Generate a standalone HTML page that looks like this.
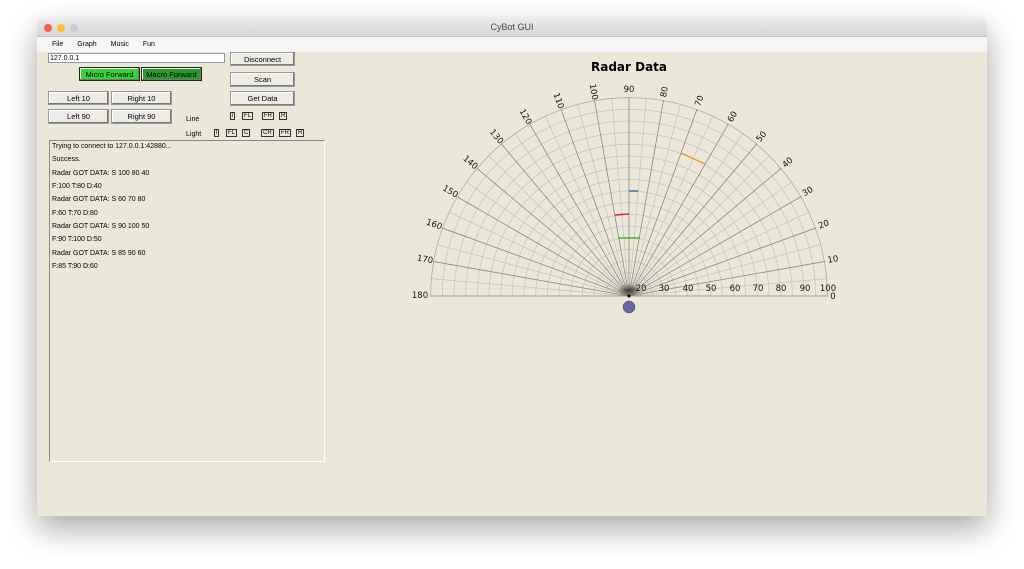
<!DOCTYPE html>
<html><head><meta charset="utf-8"><style>
body{margin:0;width:1024px;height:569px;background:#fff;font-family:"Liberation Sans",sans-serif;position:relative;overflow:hidden}
.win{position:absolute;left:37px;top:19px;width:950px;height:497px;background:#ebe8da;box-shadow:0 12px 30px rgba(0,0,0,.35)}
.title{height:17px;background:linear-gradient(#ebebeb,#d6d6d6);border-bottom:1px solid #c0c0c0;text-align:center;font-size:9px;line-height:17px;color:#444}
.dot{position:absolute;top:5px;width:8px;height:8px;border-radius:50%}
.menu{height:15px;background:#f6f6f6;font-size:7px;line-height:15px}
.menu span{margin-left:15px;margin-right:-3px}
.abs{position:absolute}
.btn{position:absolute;background:#ecebe5;border:1px solid #999;box-shadow:inset -1px -1px 0 #777,inset 1px 1px 0 #fff;font-size:7.5px;text-align:center;box-sizing:border-box}
.lg{position:absolute;font-size:7px}
.box{position:absolute;border:1px solid #333;font-size:6px;line-height:6px;padding:0 1px;height:8px;box-sizing:border-box}
.log{position:absolute;left:12px;top:121px;width:276px;height:322px;border:1px solid #888;border-right-color:#fff;border-bottom-color:#fff;box-sizing:border-box;font-size:7px}
.log div{height:13.33px;line-height:12px;padding-left:2px}
</style></head><body>
<div class="win">
<div class="title">CyBot GUI</div>
<div class="dot" style="left:7px;background:#fc5f57"></div>
<div class="dot" style="left:20px;background:#fdbc2e"></div>
<div class="dot" style="left:33px;background:#ccc"></div>
<div class="menu"><span>File</span> <span>Graph</span> <span>Music</span> <span>Fun</span></div>
<div class="abs" style="left:11px;top:34px;width:177px;height:10px;background:#fff;border:1px solid #999;box-sizing:border-box;font-size:7px;line-height:9px;padding-left:1px">127.0.0.1</div>
<div class="btn" style="left:193px;top:33px;width:65px;height:14px;line-height:13px">Disconnect</div>
<div class="btn" style="left:42px;top:48px;width:61px;height:14px;line-height:13px;background:#33d533;border-color:#222">Micro Forward</div>
<div class="btn" style="left:104px;top:48px;width:61px;height:14px;line-height:13px;background:#279b27;border-color:#222">Macro Forward</div>
<div class="btn" style="left:193px;top:53px;width:65px;height:15px;line-height:14px">Scan</div>
<div class="btn" style="left:11px;top:72px;width:61px;height:14px;line-height:13px">Left 10</div>
<div class="btn" style="left:74px;top:72px;width:61px;height:14px;line-height:13px">Right 10</div>
<div class="btn" style="left:193px;top:72px;width:65px;height:15px;line-height:14px">Get Data</div>
<div class="btn" style="left:11px;top:90px;width:61px;height:15px;line-height:14px">Left 90</div>
<div class="btn" style="left:74px;top:90px;width:61px;height:15px;line-height:14px">Right 90</div>
<div class="lg" style="left:149px;top:97px">Line</div>
<div class="lg" style="left:149px;top:112px">Light</div>
<div class="box" style="left:193px;top:93px">l</div>
<div class="box" style="left:205px;top:93px">FL</div>
<div class="box" style="left:225px;top:93px">FR</div>
<div class="box" style="left:242px;top:93px">R</div>
<div class="box" style="left:177px;top:110px">l</div>
<div class="box" style="left:189px;top:110px">FL</div>
<div class="box" style="left:205px;top:110px">C</div>
<div class="box" style="left:224px;top:110px">CR</div>
<div class="box" style="left:242px;top:110px">FR</div>
<div class="box" style="left:259px;top:110px">R</div>
<div class="log">
<div>Trying to connect to 127.0.0.1:42880...</div><div>Success.</div>
<div>Radar GOT DATA: S 100 80 40</div><div>F:100 T:80 D:40</div>
<div>Radar GOT DATA: S 60 70 80</div><div>F:60 T:70 D:80</div>
<div>Radar GOT DATA: S 90 100 50</div><div>F:90 T:100 D:50</div>
<div>Radar GOT DATA: S 85 90 60</div><div>F:85 T:90 D:60</div>
</div>
</div>
<svg class="abs" style="left:0;top:0" width="1024" height="569" font-family="DejaVu Sans,sans-serif">
<text x="629" y="71" text-anchor="middle" font-size="12" font-weight="bold">Radar Data</text>
<defs><clipPath id="c"><rect x="400" y="60" width="460" height="236"/></clipPath>
<radialGradient id="g"><stop offset="0" stop-color="#000"/><stop offset="1" stop-color="#000" stop-opacity="0"/></radialGradient></defs>
<g clip-path="url(#c)" fill="none" stroke="#c9c7bc" stroke-width=".8">
<circle cx="629" cy="296" r="11.67"/><circle cx="629" cy="296" r="23.33"/><circle cx="629" cy="296" r="35"/><circle cx="629" cy="296" r="46.67"/><circle cx="629" cy="296" r="58.33"/><circle cx="629" cy="296" r="70"/><circle cx="629" cy="296" r="81.67"/><circle cx="629" cy="296" r="93.33"/><circle cx="629" cy="296" r="105"/><circle cx="629" cy="296" r="116.67"/><circle cx="629" cy="296" r="128.33"/><circle cx="629" cy="296" r="140"/><circle cx="629" cy="296" r="151.67"/><circle cx="629" cy="296" r="163.33"/><circle cx="629" cy="296" r="175"/><circle cx="629" cy="296" r="186.67"/><circle cx="629" cy="296" r="198.33" stroke="#aaa"/>
</g>
<g transform="translate(629,296)" stroke="#c4c2b8" stroke-width=".7">
<line x2="199" transform="rotate(-5)"/><line x2="199" transform="rotate(-15)"/><line x2="199" transform="rotate(-25)"/><line x2="199" transform="rotate(-35)"/><line x2="199" transform="rotate(-45)"/><line x2="199" transform="rotate(-55)"/><line x2="199" transform="rotate(-65)"/><line x2="199" transform="rotate(-75)"/><line x2="199" transform="rotate(-85)"/><line x2="199" transform="rotate(-95)"/><line x2="199" transform="rotate(-105)"/><line x2="199" transform="rotate(-115)"/><line x2="199" transform="rotate(-125)"/><line x2="199" transform="rotate(-135)"/><line x2="199" transform="rotate(-145)"/><line x2="199" transform="rotate(-155)"/><line x2="199" transform="rotate(-165)"/><line x2="199" transform="rotate(-175)"/>
</g>
<g transform="translate(629,296)" stroke="#8a8880" stroke-width=".8">
<line x2="199"/><line x2="199" transform="rotate(-10)"/><line x2="199" transform="rotate(-20)"/><line x2="199" transform="rotate(-30)"/><line x2="199" transform="rotate(-40)"/><line x2="199" transform="rotate(-50)"/><line x2="199" transform="rotate(-60)"/><line x2="199" transform="rotate(-70)"/><line x2="199" transform="rotate(-80)"/><line x2="199" transform="rotate(-90)"/><line x2="199" transform="rotate(-100)"/><line x2="199" transform="rotate(-110)"/><line x2="199" transform="rotate(-120)"/><line x2="199" transform="rotate(-130)"/><line x2="199" transform="rotate(-140)"/><line x2="199" transform="rotate(-150)"/><line x2="199" transform="rotate(-160)"/><line x2="199" transform="rotate(-170)"/><line x2="199" transform="rotate(-180)"/>
</g>
<path d="M617 296 A12 12 0 0 1 641 296 Z" fill="url(#g)" opacity=".6"/>
<circle cx="629" cy="296" r="1.5" fill="#000"/>
<g stroke-width="1.5">
<line x1="619" y1="238" x2="640" y2="238" stroke="#3cb82c"/>
<line x1="615" y1="215" x2="629" y2="214" stroke="#e02828"/>
<line x1="629" y1="191" x2="638" y2="191" stroke="#3a6fb8"/>
<line x1="681" y1="153" x2="705" y2="164" stroke="#e0a020"/>
</g>
<circle cx="629" cy="307" r="6" fill="#6a65a8" stroke="#444" stroke-width=".5"/>
<g font-size="8.5" text-anchor="middle" dominant-baseline="central" fill="#111">
<text x="833" y="297">0</text>
<text x="833" y="260" transform="rotate(-10 833 260)">10</text>
<text x="824" y="225" transform="rotate(-20 824 225)">20</text>
<text x="808" y="192" transform="rotate(-30 808 192)">30</text>
<text x="788" y="163" transform="rotate(-40 788 163)">40</text>
<text x="762" y="137" transform="rotate(-50 762 137)">50</text>
<text x="733" y="117" transform="rotate(-60 733 117)">60</text>
<text x="700" y="101" transform="rotate(-70 700 101)">70</text>
<text x="665" y="92" transform="rotate(-80 665 92)">80</text>
<text x="629" y="90">90</text>
<text x="593" y="92" transform="rotate(80 593 92)">100</text>
<text x="558" y="101" transform="rotate(70 558 101)">110</text>
<text x="525" y="117" transform="rotate(60 525 117)">120</text>
<text x="496" y="137" transform="rotate(50 496 137)">130</text>
<text x="470" y="163" transform="rotate(40 470 163)">140</text>
<text x="450" y="192" transform="rotate(30 450 192)">150</text>
<text x="434" y="225" transform="rotate(20 434 225)">160</text>
<text x="425" y="260" transform="rotate(10 425 260)">170</text>
<text x="420" y="296">180</text>
<text x="641" y="289">20</text><text x="664" y="289">30</text><text x="688" y="289">40</text><text x="711" y="289">50</text><text x="735" y="289">60</text><text x="758" y="289">70</text><text x="781" y="289">80</text><text x="805" y="289">90</text><text x="828" y="289">100</text>
</g>
</svg>
</body></html>
